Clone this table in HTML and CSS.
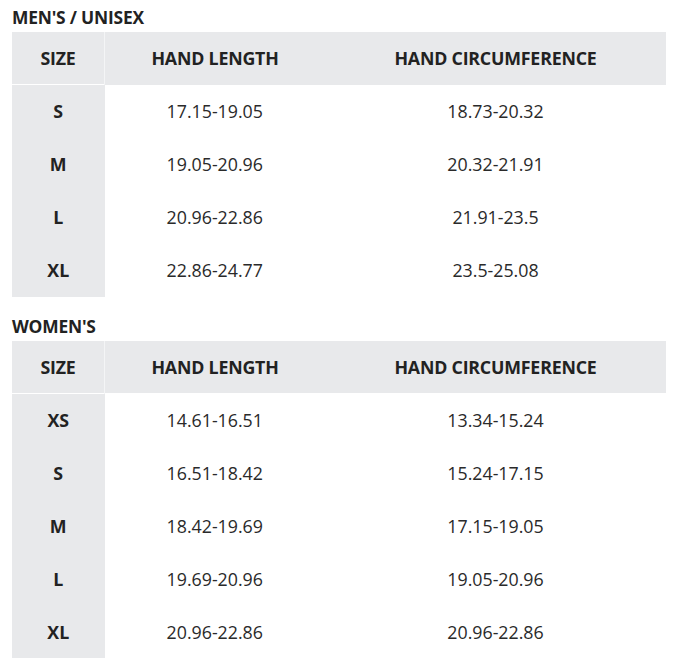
FILE: index.html
```html
<!DOCTYPE html>
<html>
<head>
<meta charset="utf-8">
<link rel="stylesheet" href="styles.css">
</head>
<body>
<section class="chart">
  <h2 class="title">MEN'S / UNISEX</h2>
  <table class="sizes">
    <thead>
      <tr><th class="size">SIZE</th><th class="len">HAND LENGTH</th><th class="circ">HAND CIRCUMFERENCE</th></tr>
    </thead>
    <tbody>
      <tr><th class="size">S</th><td>17.15-19.05</td><td>18.73-20.32</td></tr>
      <tr><th class="size">M</th><td>19.05-20.96</td><td>20.32-21.91</td></tr>
      <tr><th class="size">L</th><td>20.96-22.86</td><td>21.91-23.5</td></tr>
      <tr><th class="size">XL</th><td>22.86-24.77</td><td>23.5-25.08</td></tr>
    </tbody>
  </table>
</section>
<section class="chart">
  <h2 class="title">WOMEN'S</h2>
  <table class="sizes">
    <thead>
      <tr><th class="size">SIZE</th><th class="len">HAND LENGTH</th><th class="circ">HAND CIRCUMFERENCE</th></tr>
    </thead>
    <tbody>
      <tr><th class="size">XS</th><td>14.61-16.51</td><td>13.34-15.24</td></tr>
      <tr><th class="size">S</th><td>16.51-18.42</td><td>15.24-17.15</td></tr>
      <tr><th class="size">M</th><td>18.42-19.69</td><td>17.15-19.05</td></tr>
      <tr><th class="size">L</th><td>19.69-20.96</td><td>19.05-20.96</td></tr>
      <tr><th class="size">XL</th><td>20.96-22.86</td><td>20.96-22.86</td></tr>
    </tbody>
  </table>
</section>
</body>
</html>
```
FILE: styles.css
```css
html, body {
  margin: 0;
  padding: 0;
  background: #ffffff;
}
body {
  font-family: "Open Sans", "Liberation Sans", sans-serif;
  color: #262626;
  padding: 7px 14px 0 12px;
}
.chart {
  margin: 0 0 19px 0;
}
.title {
  margin: 0 0 5px 0;
  font-size: 17.4px;
  font-weight: 700;
  line-height: 20px;
  color: #222;
  letter-spacing: -0.2px;
}
.sizes {
  width: 654px;
  border-collapse: collapse;
  table-layout: fixed;
}
.sizes th, .sizes td {
  padding: 0;
  text-align: center;
  vertical-align: middle;
  font-size: 17.8px;
}
.sizes thead th {
  height: 52px;
  background: #e8e9eb;
  font-weight: 700;
  color: #222;
  letter-spacing: -0.2px;
}
.sizes thead th.size {
  width: 92px;
  border-right: 1px solid #f4f5f6;
}
.sizes thead th.len {
  width: 220px;
}
.sizes tbody th.size {
  background: #e8e9eb;
  font-weight: 700;
  color: #222;
}
.sizes tbody tr:first-child th.size {
  border-top: 1px solid #ffffff;
}
.sizes tbody td {
  height: 53px;
  font-weight: 400;
  color: #2a2a2a;
}
```
